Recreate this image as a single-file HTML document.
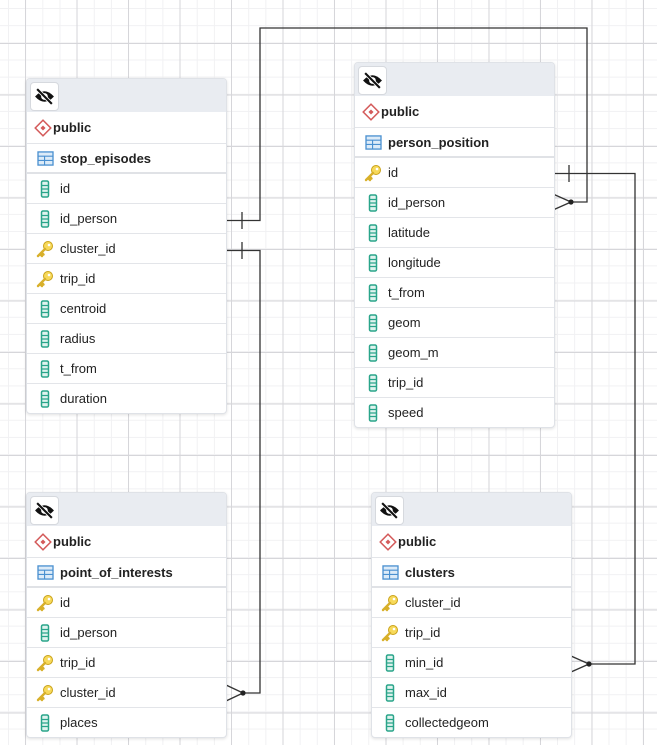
<!DOCTYPE html>
<html><head><meta charset="utf-8">
<style>
html,body{margin:0;padding:0}
body{width:657px;height:745px;overflow:hidden;position:relative;background-color:#fff;
background-image:
linear-gradient(to right,#d6d6da 1px,transparent 1px),
linear-gradient(to bottom,#d6d6da 1px,transparent 1px),
linear-gradient(to right,#f1f1f3 1px,transparent 1px),
linear-gradient(to bottom,#f1f1f3 1px,transparent 1px);
background-size:51.5px 51.5px,51.5px 51.5px,17.17px 17.17px,17.17px 17.17px;
background-position:25px 43px,25px 43px,8px 8px,8px 8px;
font-family:"Liberation Sans",Arial,sans-serif;font-size:13px;color:#222}
.t{position:absolute;width:199px;background:#fff;border:1px solid #dfe2e7;border-radius:4px;box-shadow:0 1px 3px rgba(0,0,0,.12);overflow:hidden}
.h{height:33px;background:#e9ecf1;position:relative}
.b{position:absolute;left:3px;top:3px;width:27px;height:27px;background:#fff;border:1px solid #d6d9de;border-radius:4px;display:flex;align-items:center;justify-content:center}
.p{height:31px;border-bottom:1px solid #e3e5e9;display:flex;align-items:center;padding-left:7px;font-weight:bold}
.n{height:28px;border-bottom:2px solid #e0e2e6;display:flex;align-items:center;padding-left:9px;font-weight:bold}
.r{height:29px;border-bottom:1px solid #e3e5e9;display:flex;align-items:center;padding-left:9px}
.r:last-child{border-bottom:none}
.ic{width:18px;display:inline-flex;justify-content:center;margin-right:6px}
.p .ic{width:18px;margin-right:1px}
</style></head><body>
<svg width="0" height="0" style="position:absolute">
<defs>
<symbol id="col" viewBox="0 0 10 18"><rect x="1.5" y="1" width="7" height="16" rx="1.5" fill="#dff3ee" stroke="#2aa58a" stroke-width="1.5"/><path d="M1.5 5.5h7M1.5 9h7M1.5 12.5h7" stroke="#2aa58a" stroke-width="1.2"/></symbol>
<symbol id="key" viewBox="0 0 18 18"><circle cx="12" cy="6" r="4.5" fill="#f7d95a" stroke="#c9a21a" stroke-width="1"/><circle cx="13" cy="5" r="1.3" fill="#fff"/><path d="M9 9 L2 16 M4 14 L6 16 M5.5 12.5 L7.5 14.5" stroke="#d8b02a" stroke-width="2.4" stroke-linecap="round"/></symbol>
<symbol id="sch" viewBox="0 0 18 18"><rect x="3.5" y="3.5" width="11" height="11" transform="rotate(45 9 9)" fill="#fff" stroke="#d45a5a" stroke-width="1.5"/><rect x="7.2" y="7.2" width="3.6" height="3.6" transform="rotate(45 9 9)" fill="#d45a5a"/></symbol>
<symbol id="tab" viewBox="0 0 18 16"><rect x="1" y="1" width="16" height="14" fill="#dcebf8" stroke="#4a90d0" stroke-width="1.4"/><path d="M1 5.5h16M1 10h16M8 5.5v9.5" stroke="#4a90d0" stroke-width="1.2"/></symbol>
<symbol id="eye" viewBox="0 0 20 20"><path d="M1 10 Q10 0 19 10 Q10 20 1 10Z" fill="#111"/><circle cx="10" cy="10" r="3.2" fill="#fff"/><path d="M3 3 L17 17" stroke="#fff" stroke-width="3.5"/><path d="M3 3 L17 17" stroke="#111" stroke-width="2"/></symbol>
</defs></svg>

<svg style="position:absolute;left:0;top:0" width="657" height="745">
<g fill="none" stroke="#333" stroke-width="1.3">
<path d="M226 220.5H260V28H587V202H571"/>
<path d="M242 212V229"/>
<path d="M571 202L553 194M571 202L553 210"/>
<path d="M226 250.5H260V693H243"/>
<path d="M242 242V259"/>
<path d="M243 693L226 685M243 693L226 701"/>
<path d="M553 173.5H635V664H589"/>
<path d="M569 165V182"/>
<path d="M589 664L571 656M589 664L571 672"/>
</g>
<g fill="#222"><circle cx="571" cy="202" r="2.6"/><circle cx="243" cy="693" r="2.6"/><circle cx="589" cy="664" r="2.6"/></g>
</svg>

<div class="t" style="left:26px;top:78px">
<div class="h"><div class="b"><svg width="21" height="21"><use href="#eye"/></svg></div></div>
<div class="p"><span class="ic"><svg width="18" height="18"><use href="#sch"/></svg></span>public</div>
<div class="n"><span class="ic"><svg width="17" height="15"><use href="#tab"/></svg></span>stop_episodes</div>
<div class="r"><span class="ic"><svg width="10" height="18"><use href="#col"/></svg></span>id</div>
<div class="r"><span class="ic"><svg width="10" height="18"><use href="#col"/></svg></span>id_person</div>
<div class="r"><span class="ic"><svg width="18" height="18"><use href="#key"/></svg></span>cluster_id</div>
<div class="r"><span class="ic"><svg width="18" height="18"><use href="#key"/></svg></span>trip_id</div>
<div class="r"><span class="ic"><svg width="10" height="18"><use href="#col"/></svg></span>centroid</div>
<div class="r"><span class="ic"><svg width="10" height="18"><use href="#col"/></svg></span>radius</div>
<div class="r"><span class="ic"><svg width="10" height="18"><use href="#col"/></svg></span>t_from</div>
<div class="r"><span class="ic"><svg width="10" height="18"><use href="#col"/></svg></span>duration</div>
</div>

<div class="t" style="left:354px;top:62px">
<div class="h"><div class="b"><svg width="21" height="21"><use href="#eye"/></svg></div></div>
<div class="p"><span class="ic"><svg width="18" height="18"><use href="#sch"/></svg></span>public</div>
<div class="n"><span class="ic"><svg width="17" height="15"><use href="#tab"/></svg></span>person_position</div>
<div class="r"><span class="ic"><svg width="18" height="18"><use href="#key"/></svg></span>id</div>
<div class="r"><span class="ic"><svg width="10" height="18"><use href="#col"/></svg></span>id_person</div>
<div class="r"><span class="ic"><svg width="10" height="18"><use href="#col"/></svg></span>latitude</div>
<div class="r"><span class="ic"><svg width="10" height="18"><use href="#col"/></svg></span>longitude</div>
<div class="r"><span class="ic"><svg width="10" height="18"><use href="#col"/></svg></span>t_from</div>
<div class="r"><span class="ic"><svg width="10" height="18"><use href="#col"/></svg></span>geom</div>
<div class="r"><span class="ic"><svg width="10" height="18"><use href="#col"/></svg></span>geom_m</div>
<div class="r"><span class="ic"><svg width="10" height="18"><use href="#col"/></svg></span>trip_id</div>
<div class="r"><span class="ic"><svg width="10" height="18"><use href="#col"/></svg></span>speed</div>
</div>

<div class="t" style="left:26px;top:492px">
<div class="h"><div class="b"><svg width="21" height="21"><use href="#eye"/></svg></div></div>
<div class="p"><span class="ic"><svg width="18" height="18"><use href="#sch"/></svg></span>public</div>
<div class="n"><span class="ic"><svg width="17" height="15"><use href="#tab"/></svg></span>point_of_interests</div>
<div class="r"><span class="ic"><svg width="18" height="18"><use href="#key"/></svg></span>id</div>
<div class="r"><span class="ic"><svg width="10" height="18"><use href="#col"/></svg></span>id_person</div>
<div class="r"><span class="ic"><svg width="18" height="18"><use href="#key"/></svg></span>trip_id</div>
<div class="r"><span class="ic"><svg width="18" height="18"><use href="#key"/></svg></span>cluster_id</div>
<div class="r"><span class="ic"><svg width="10" height="18"><use href="#col"/></svg></span>places</div>
</div>

<div class="t" style="left:371px;top:492px">
<div class="h"><div class="b"><svg width="21" height="21"><use href="#eye"/></svg></div></div>
<div class="p"><span class="ic"><svg width="18" height="18"><use href="#sch"/></svg></span>public</div>
<div class="n"><span class="ic"><svg width="17" height="15"><use href="#tab"/></svg></span>clusters</div>
<div class="r"><span class="ic"><svg width="18" height="18"><use href="#key"/></svg></span>cluster_id</div>
<div class="r"><span class="ic"><svg width="18" height="18"><use href="#key"/></svg></span>trip_id</div>
<div class="r"><span class="ic"><svg width="10" height="18"><use href="#col"/></svg></span>min_id</div>
<div class="r"><span class="ic"><svg width="10" height="18"><use href="#col"/></svg></span>max_id</div>
<div class="r"><span class="ic"><svg width="10" height="18"><use href="#col"/></svg></span>collectedgeom</div>
</div>
</body></html>
